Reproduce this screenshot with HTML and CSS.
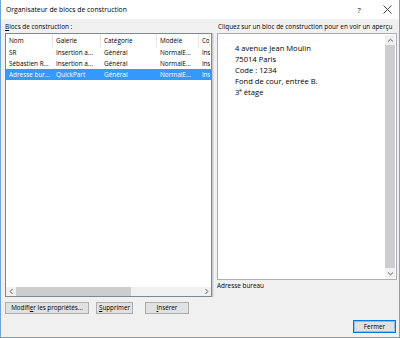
FILE: index.html
```html
<!DOCTYPE html>
<html lang="fr">
<head>
    <meta charset="UTF-8">
    <meta name="viewport" content="width=device-width, initial-scale=1.0">
    <title>Organisateur de blocs de construction</title>
    <link rel="stylesheet" href="styles.css">
</head>
<body>
    <div class="window">
        <!-- Title bar -->
        <div class="titlebar">
            <span class="title">Organisateur de blocs de construction</span>
            <span class="title-btn help">?</span>
            <span class="title-btn close">
                <svg width="9" height="9" viewBox="0 0 9 9"><path d="M0.5 0.5 L8.5 8.5 M8.5 0.5 L0.5 8.5" stroke="#333" stroke-width="0.9"/></svg>
            </span>
        </div>

        <div class="dialog">
            <!-- Left: building blocks list -->
            <div class="left-pane">
                <div class="label"><u>B</u>locs de construction :</div>
                <div class="listview">
                    <div class="list-inner">
                        <div class="row header">
                            <span class="c1">Nom</span>
                            <span class="c2">Galerie</span>
                            <span class="c3">Catégorie</span>
                            <span class="c4">Modèle</span>
                            <span class="c5">Co</span>
                        </div>
                        <div class="row">
                            <span class="c1">SR</span>
                            <span class="c2">Insertion a...</span>
                            <span class="c3">Général</span>
                            <span class="c4">NormalE...</span>
                            <span class="c5">Ins</span>
                        </div>
                        <div class="row">
                            <span class="c1">Sébastien R...</span>
                            <span class="c2">Insertion a...</span>
                            <span class="c3">Général</span>
                            <span class="c4">NormalE...</span>
                            <span class="c5">Ins</span>
                        </div>
                        <div class="row selected">
                            <span class="c1">Adresse bur...</span>
                            <span class="c2">QuickPart</span>
                            <span class="c3">Général</span>
                            <span class="c4">NormalE...</span>
                            <span class="c5">Ins</span>
                        </div>
                    </div>
                    <div class="hscroll">
                        <span class="arrow">
                            <svg width="5" height="7" viewBox="0 0 5 7"><path d="M3.5 1 L1.2 3.5 L3.5 6" fill="none" stroke="#606060" stroke-width="1"/></svg>
                        </span>
                        <div class="track"><div class="thumb"></div></div>
                        <span class="arrow">
                            <svg width="5" height="7" viewBox="0 0 5 7"><path d="M1.5 1 L3.8 3.5 L1.5 6" fill="none" stroke="#606060" stroke-width="1"/></svg>
                        </span>
                    </div>
                </div>
                <div class="buttons">
                    <button class="btn props">Modifi<u>e</u>r les propriétés...</button>
                    <button class="btn delete"><u>S</u>upprimer</button>
                    <button class="btn insert"><u>I</u>nsérer</button>
                </div>
            </div>

            <!-- Right: preview -->
            <div class="right-pane">
                <div class="label">Cliquez sur un bloc de construction pour en voir un aperçu</div>
                <div class="preview">
                    <div class="preview-text">
                        <p>4 avenue Jean Moulin</p>
                        <p>75014 Paris</p>
                        <p>Code : 1234</p>
                        <p>Fond de cour, entrée B.</p>
                        <p>3<sup>e</sup> étage</p>
                    </div>
                    <div class="vscroll">
                        <span class="arrow">
                            <svg width="7" height="5" viewBox="0 0 7 5"><path d="M1 3.5 L3.5 1.2 L6 3.5" fill="none" stroke="#606060" stroke-width="1"/></svg>
                        </span>
                        <div class="vthumb"></div>
                        <span class="arrow">
                            <svg width="7" height="5" viewBox="0 0 7 5"><path d="M1 1.5 L3.5 3.8 L6 1.5" fill="none" stroke="#606060" stroke-width="1"/></svg>
                        </span>
                    </div>
                </div>
                <div class="caption">Adresse bureau</div>
                <div class="footer">
                    <button class="btn default">Fermer</button>
                </div>
            </div>
        </div>
    </div>
</body>
</html>
```

FILE: styles.css
```css
body {
    margin: 0;
    font-family: "Open Sans", "Noto Sans", sans-serif;
    font-size: 6.4px;
    color: #000;
}
.window {
    width: 400px;
    height: 338px;
    box-sizing: border-box;
    border: 1px solid #6ea4d8;
    border-top: none;
    background-color: #f0f0f0;
    display: flex;
    flex-direction: column;
}
.titlebar {
    height: 19px;
    background-color: #fff;
    display: flex;
    align-items: center;
    padding-left: 5px;
}
.title {
    flex: 1;
    font-size: 6.8px;
}
.title-btn {
    display: flex;
    justify-content: center;
    font-size: 7.5px;
}
.title-btn.help {
    width: 32px;
}
.title-btn.close {
    width: 24px;
}
.dialog {
    flex: 1;
    display: flex;
    gap: 5px;
    padding: 2px 2px 4px 4px;
}
.label {
    height: 12px;
    line-height: 12px;
    white-space: nowrap;
    overflow: hidden;
}
.left-pane {
    width: 207px;
    display: flex;
    flex-direction: column;
}
.listview {
    height: 262px;
    border: 1px solid #828790;
    box-shadow: 1px 0 0 #c8c8c8, 2px 0 0 #e0e0e0;
    background-color: #fff;
    display: flex;
    flex-direction: column;
}
.list-inner {
    flex: 1;
    overflow: hidden;
}
.row {
    display: flex;
    height: 11px;
    line-height: 11px;
    white-space: nowrap;
}
.row span {
    box-sizing: border-box;
    padding-left: 3px;
    overflow: hidden;
    flex-shrink: 0;
}
.row.header {
    height: 13px;
    line-height: 13px;
}
.row.header span {
    border-right: 1px solid #e5e5e5;
}
.row.selected {
    background-color: #3399ff;
    color: #fff;
}
.c1 { width: 47px; }
.c2 { width: 48px; }
.c3 { width: 56px; }
.c4 { width: 42px; }
.row .c5 {
    width: 11px;
    border-right: none;
    letter-spacing: -0.2px;
}
.hscroll {
    height: 9px;
    display: flex;
    align-items: center;
    background-color: #f0f0f0;
}
.hscroll .arrow {
    width: 10px;
    display: flex;
    justify-content: center;
}
.track {
    flex: 1;
    height: 100%;
}
.thumb {
    width: 115px;
    height: 100%;
    background-color: #cdcdcd;
}
.buttons {
    display: flex;
    margin-top: 5px;
}
.btn {
    height: 12px;
    padding: 0;
    font-family: inherit;
    font-size: 6.3px;
    background-color: #e1e1e1;
    border: 1px solid #adadad;
    line-height: 10px;
}
.btn.props {
    width: 84px;
}
.btn.delete {
    width: 37px;
    margin-left: 7px;
}
.btn.insert {
    width: 44px;
    margin-left: 12px;
}
.right-pane {
    flex: 1;
    display: flex;
    flex-direction: column;
    min-width: 0;
}
.right-pane .label {
    font-size: 6.4px;
    margin-left: 1px;
}
.preview {
    height: 245px;
    border: 1px solid #abadb3;
    background-color: #fff;
    display: flex;
}
.preview-text {
    flex: 1;
    padding: 9px 0 0 17px;
    font-size: 7.6px;
    line-height: 11px;
}
.preview-text p {
    margin: 0;
}
.preview-text sup {
    font-size: 4.5px;
    line-height: 0;
    vertical-align: 3px;
}
.vscroll {
    width: 10px;
    margin: 1px 1px 1px 0;
    display: flex;
    flex-direction: column;
    align-items: center;
    background-color: #f0f0f0;
}
.vscroll .arrow {
    height: 10px;
    display: flex;
    align-items: center;
}
.vthumb {
    flex: 1;
    width: 100%;
    background-color: #cdcdcd;
}
.caption {
    margin-top: 1px;
    line-height: 10px;
}
.footer {
    flex: 1;
    display: flex;
    justify-content: flex-end;
    align-items: flex-end;
    padding-right: 1px;
}
.btn.default {
    width: 43px;
    height: 13px;
    border: 1px solid #0078d7;
    box-shadow: inset 0 0 0 1px #8cc0ef;
}
```
